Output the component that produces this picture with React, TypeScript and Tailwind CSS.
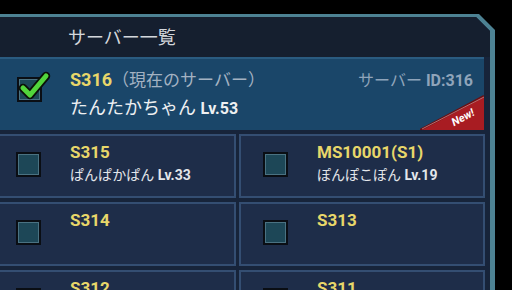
const font = { fontFamily: 'Roboto, "Noto Sans CJK JP", sans-serif' };

const CheckBox = ({ checked = false }: { checked?: boolean }) => (
  <div className='relative w-[25px] h-[25px] shrink-0 border-2 border-[#0a0e14] bg-[#1d4757]'>
    <div className='h-full w-full border border-[#4a7282]' />
    {checked && (
      <svg className='absolute -left-[1px] -top-[9px]' width='34' height='32' viewBox='0 0 34 32'>
        <path d='M5 18 L12 25 L28 6' fill='none' stroke='#0b1108' strokeWidth='8.5' strokeLinecap='round' strokeLinejoin='round' />
        <path d='M5 18 L12 25 L28 6' fill='none' stroke='#52d63c' strokeWidth='5' strokeLinecap='round' strokeLinejoin='round' />
      </svg>
    )}
  </div>
);

const servers = [
  { id: 'S315', name: 'ぱんぱかぱん', lv: '33' },
  { id: 'MS10001(S1)', name: 'ぽんぽこぽん', lv: '19' },
  { id: 'S314' },
  { id: 'S313' },
  { id: 'S312' },
  { id: 'S311' },
];

const Cell = ({ id, name, lv }: { id: string; name?: string; lv?: string }) => (
  <div className='h-[64px] border-2 border-[#344e72] bg-[#1e2d49] flex items-start pl-[22px] pt-[16px]'>
    <CheckBox />
    <div className='ml-[29px] -mt-[10px] flex flex-col'>
      <span className='text-[17px] leading-[20px] font-bold text-[#e8d76a]'>{id}</span>
      {name && (
        <span className='mt-[3px] text-[14px] leading-[20px] text-[#e3e6ea]'>
          {name} <span className='font-bold text-[14px]'>Lv.{lv}</span>
        </span>
      )}
    </div>
  </div>
);

export default function App() {
  return (
    <div className='w-[512px] h-[290px] bg-black overflow-hidden' style={font}>
      <div className='h-[14px]' />
      <div className='-ml-2 w-[503px] h-[276px] bg-[#4d8293] pt-[3px] pr-[5px] [clip-path:polygon(0_0,487px_0,503px_16px,503px_100%,0_100%)]'>
        <div className='h-full bg-[#17243a] [clip-path:polygon(0_0,484px_0,498px_14px,498px_100%,0_100%)]'>
          <div className='h-[40px] bg-[#151f2f] flex items-center pl-[76px]'>
            <span className='text-[18px] text-[#d3d7dc]'>サーバー一覧</span>
          </div>

          <div className='mr-[6px] relative h-[73px] bg-[#1a4669] border-t-2 border-[#2a5b80] flex items-start pl-[25px] pt-[18px] overflow-hidden'>
            <CheckBox checked />
            <div className='ml-[28px] -mt-[8px] flex-1 flex flex-col'>
              <div className='flex items-baseline justify-between pr-[11px]'>
                <span className='text-[18px] leading-[22px]'>
                  <span className='font-bold text-[#e8d76a]'>S316</span>
                  <span className='text-[#a3b2c2] text-[17px]'>（現在のサーバー）</span>
                </span>
                <span className='text-[16px] text-[#8fa4ba]'>
                  サーバー <span className='font-bold'>ID:316</span>
                </span>
              </div>
              <span className='mt-[4px] text-[18px] leading-[22px] text-[#eef0f2]'>
                たんたかちゃん <span className='font-bold text-[16px]'>Lv.53</span>
              </span>
            </div>
            <svg className='absolute right-0 bottom-0' width='64' height='36' viewBox='0 0 64 36'>
              <polygon points='0,36 64,2 64,36' fill='#a81c22' />
              <polyline points='0,36 64,2' stroke='#6b0e12' strokeWidth='2' fill='none' />
              <polyline points='2,35 64,3' stroke='#e8b0b0' strokeWidth='0.6' fill='none' />
            </svg>
            <span className='absolute right-[9px] bottom-[7px] -rotate-[28deg] text-[11px] leading-none font-bold italic text-white'>
              New!
            </span>
          </div>

          <div className='mt-[4px] grid grid-cols-[244px_246px] gap-x-[3px] gap-y-[4px]'>
            {servers.map((s) => (
              <Cell key={s.id} id={s.id} name={s.name} lv={s.lv} />
            ))}
          </div>
        </div>
      </div>
    </div>
  );
}
